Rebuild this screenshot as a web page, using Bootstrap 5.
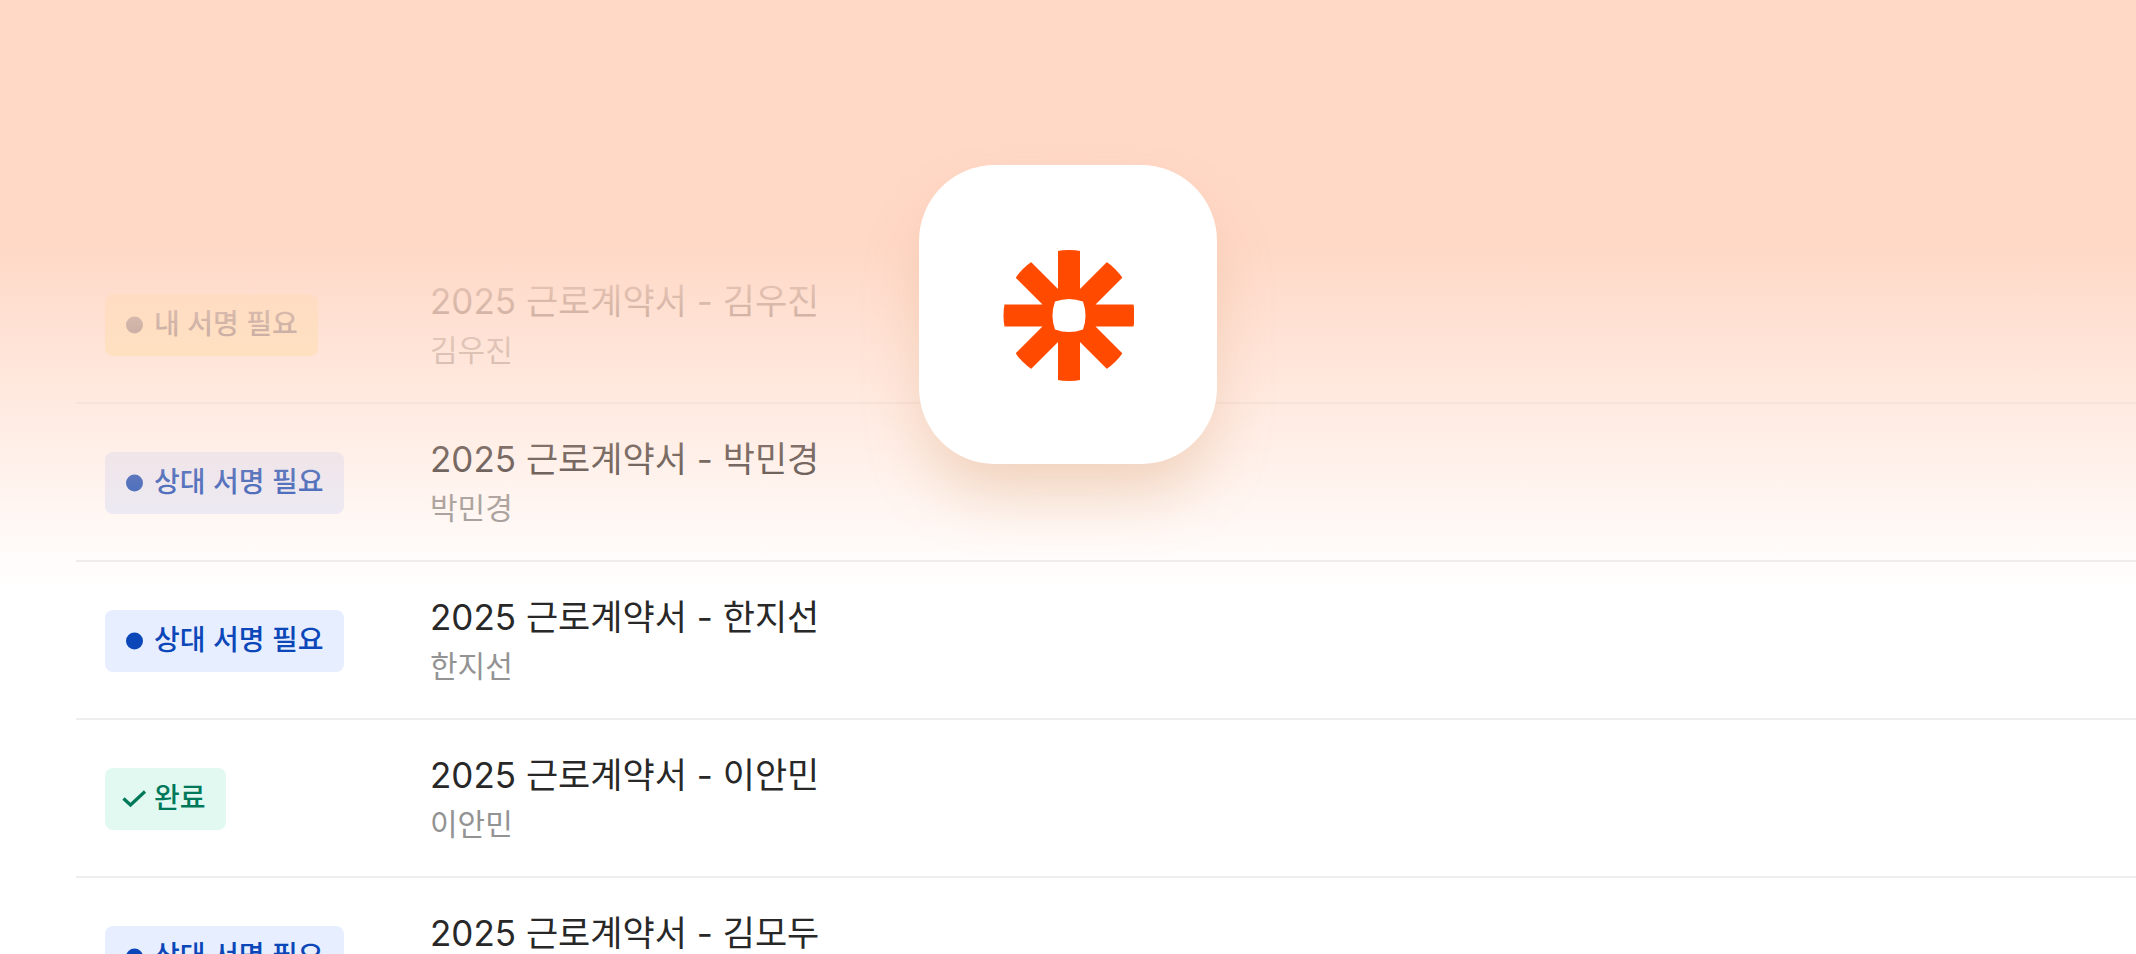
<!DOCTYPE html>
<html lang="ko">
<head>
<meta charset="utf-8">
<meta name="viewport" content="width=device-width, initial-scale=1">
<title>2025 근로계약서</title>
<link href="https://cdn.jsdelivr.net/npm/bootstrap@5.3.0/dist/css/bootstrap.min.css" rel="stylesheet">
<style>
  body { font-family: Inter, "Noto Sans CJK KR", sans-serif; color: #282828; background: #fff; }
  .stage { padding-top: 246px; padding-left: 76px; }
  .doc-row { padding: 32px 29px 30px; border-bottom: 2px solid #eeeeef; }
  .status-col { width: 325px; }
  .status { height: 62px; padding: 0 20px 2px 15px; gap: 6px; border-radius: 8px; font-size: 28px; line-height: 40px; font-weight: 500; white-space: nowrap; }
  .status svg { width: 28px; height: 28px; flex: none; }
  .status-mine { background: #fff3b4; color: #3c4048; }
  .status-other { background: #e7eeff; color: #0b47b9; }
  .status-done { background: #e2f9f2; color: #00795a; }
  .doc-title { font-size: 35px; line-height: 46px; }
  .doc-name { font-size: 30px; line-height: 40px; padding: 6px 0 2px; color: #939393; }
  .fade-top { height: 590px; background: linear-gradient(#ffd8c6 243px, rgba(255, 216, 198, 0)); }
  .app-tile { top: 165px; width: 298px; height: 299px; border-radius: 76px; background: #fff; box-shadow: 0 36px 60px -8px rgba(214, 154, 104, .36); }
  .app-tile svg { width: 132px; height: 132px; }
</style>
</head>
<body>
<svg class="d-none" aria-hidden="true">
  <symbol id="dot" viewBox="0 0 28 28"><circle cx="14.500" cy="15" r="8.500" fill="currentColor"/></symbol>
  <symbol id="check" viewBox="0 0 28 28"><path d="M3.500 14.500 10.500 21 25 7.500" fill="none" stroke="currentColor" stroke-width="3.200"/></symbol>
</svg>
<main class="stage position-relative vh-100 overflow-hidden">
  <ul class="list-unstyled mb-0">
    <li class="doc-row d-flex align-items-center">
      <div class="status-col flex-shrink-0"><span class="status status-mine d-inline-flex align-items-center align-top"><svg aria-hidden="true"><use href="#dot"/></svg>내 서명 필요</span></div>
      <div><div class="doc-title">2025 근로계약서 - 김우진</div><div class="doc-name">김우진</div></div>
    </li>
    <li class="doc-row d-flex align-items-center">
      <div class="status-col flex-shrink-0"><span class="status status-other d-inline-flex align-items-center align-top"><svg aria-hidden="true"><use href="#dot"/></svg>상대 서명 필요</span></div>
      <div><div class="doc-title">2025 근로계약서 - 박민경</div><div class="doc-name">박민경</div></div>
    </li>
    <li class="doc-row d-flex align-items-center">
      <div class="status-col flex-shrink-0"><span class="status status-other d-inline-flex align-items-center align-top"><svg aria-hidden="true"><use href="#dot"/></svg>상대 서명 필요</span></div>
      <div><div class="doc-title">2025 근로계약서 - 한지선</div><div class="doc-name">한지선</div></div>
    </li>
    <li class="doc-row d-flex align-items-center">
      <div class="status-col flex-shrink-0"><span class="status status-done d-inline-flex align-items-center align-top"><svg aria-hidden="true"><use href="#check"/></svg>완료</span></div>
      <div><div class="doc-title">2025 근로계약서 - 이안민</div><div class="doc-name">이안민</div></div>
    </li>
    <li class="doc-row d-flex align-items-center">
      <div class="status-col flex-shrink-0"><span class="status status-other d-inline-flex align-items-center align-top"><svg aria-hidden="true"><use href="#dot"/></svg>상대 서명 필요</span></div>
      <div><div class="doc-title">2025 근로계약서 - 김모두</div><div class="doc-name">김모두</div></div>
    </li>
  </ul>
  <div class="fade-top position-absolute top-0 start-0 w-100"></div>
  <div class="app-tile position-absolute start-50 translate-middle-x d-flex align-items-center justify-content-center">
    <svg viewBox="-67 -66.500 132 132" role="img" aria-label="Zapier">
      <clipPath id="disc"><circle r="65.500"/></clipPath>
      <path clip-path="url(#disc)" d="M0-70V70M-70 0H70M-50-50 50 50M-50 50 50-50" stroke="#ff4a00" stroke-width="22" fill="none"/>
      <path d="M-14-14Q0-19 14-14Q19 0 14 14Q0 19-14 14Q-19 0-14-14Z" fill="#fff"/>
    </svg>
  </div>
</main>
<script src="https://cdn.jsdelivr.net/npm/bootstrap@5.3.0/dist/js/bootstrap.bundle.min.js"></script>
</body>
</html>
